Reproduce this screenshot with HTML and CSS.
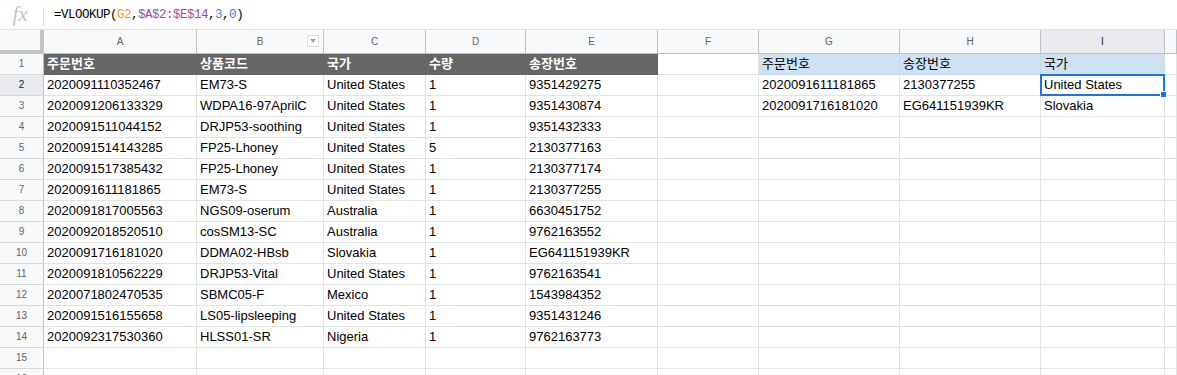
FILE: index.html
```html
<!DOCTYPE html>
<html lang="ko">
<head>
    <meta charset="UTF-8">
    <title>VLOOKUP</title>
    <link rel="stylesheet" href="styles.css">
</head>
<body>
    <div class="formula-bar">
        <span class="fx">fx</span>
        <span class="sep"></span>
        <div class="formula">=VLOOKUP(<span class="ref1">G2</span>,<span class="ref2">$A$2:$E$14</span>,<span class="num">3</span>,<span class="num">0</span>)</div>
    </div>

    <div class="sheet">
        <!-- column headers -->
        <div class="corner"></div>
        <div class="ch">A</div>
        <div class="ch filter-col">B<span class="filter"></span></div>
        <div class="ch">C</div>
        <div class="ch">D</div>
        <div class="ch">E</div>
        <div class="ch">F</div>
        <div class="ch">G</div>
        <div class="ch">H</div>
        <div class="ch active">I</div>
        <div class="ch"></div>

        <!-- row 1 -->
        <div class="rh">1</div>
        <div class="c dark">주문번호</div>
        <div class="c dark">상품코드</div>
        <div class="c dark">국가</div>
        <div class="c dark">수량</div>
        <div class="c dark">송장번호</div>
        <div class="c"></div>
        <div class="c blue">주문번호</div>
        <div class="c blue">송장번호</div>
        <div class="c blue">국가</div>
        <div class="c"></div>

        <!-- row 2 -->
        <div class="rh active">2</div>
        <div class="c">2020091110352467</div>
        <div class="c">EM73-S</div>
        <div class="c">United States</div>
        <div class="c">1</div>
        <div class="c">9351429275</div>
        <div class="c"></div>
        <div class="c">2020091611181865</div>
        <div class="c">2130377255</div>
        <div class="c selected">United States<span class="handle"></span></div>
        <div class="c"></div>

        <!-- row 3 -->
        <div class="rh">3</div>
        <div class="c">2020091206133329</div>
        <div class="c">WDPA16-97AprilC</div>
        <div class="c">United States</div>
        <div class="c">1</div>
        <div class="c">9351430874</div>
        <div class="c"></div>
        <div class="c">2020091716181020</div>
        <div class="c">EG641151939KR</div>
        <div class="c">Slovakia</div>
        <div class="c"></div>

        <div class="rh">4</div>
        <div class="c">2020091511044152</div>
        <div class="c">DRJP53-soothing</div>
        <div class="c">United States</div>
        <div class="c">1</div>
        <div class="c">9351432333</div>
        <div class="c"></div><div class="c"></div><div class="c"></div><div class="c"></div><div class="c"></div>

        <div class="rh">5</div>
        <div class="c">2020091514143285</div>
        <div class="c">FP25-Lhoney</div>
        <div class="c">United States</div>
        <div class="c">5</div>
        <div class="c">2130377163</div>
        <div class="c"></div><div class="c"></div><div class="c"></div><div class="c"></div><div class="c"></div>

        <div class="rh">6</div>
        <div class="c">2020091517385432</div>
        <div class="c">FP25-Lhoney</div>
        <div class="c">United States</div>
        <div class="c">1</div>
        <div class="c">2130377174</div>
        <div class="c"></div><div class="c"></div><div class="c"></div><div class="c"></div><div class="c"></div>

        <div class="rh">7</div>
        <div class="c">2020091611181865</div>
        <div class="c">EM73-S</div>
        <div class="c">United States</div>
        <div class="c">1</div>
        <div class="c">2130377255</div>
        <div class="c"></div><div class="c"></div><div class="c"></div><div class="c"></div><div class="c"></div>

        <div class="rh">8</div>
        <div class="c">2020091817005563</div>
        <div class="c">NGS09-oserum</div>
        <div class="c">Australia</div>
        <div class="c">1</div>
        <div class="c">6630451752</div>
        <div class="c"></div><div class="c"></div><div class="c"></div><div class="c"></div><div class="c"></div>

        <div class="rh">9</div>
        <div class="c">2020092018520510</div>
        <div class="c">cosSM13-SC</div>
        <div class="c">Australia</div>
        <div class="c">1</div>
        <div class="c">9762163552</div>
        <div class="c"></div><div class="c"></div><div class="c"></div><div class="c"></div><div class="c"></div>

        <div class="rh">10</div>
        <div class="c">2020091716181020</div>
        <div class="c">DDMA02-HBsb</div>
        <div class="c">Slovakia</div>
        <div class="c">1</div>
        <div class="c">EG641151939KR</div>
        <div class="c"></div><div class="c"></div><div class="c"></div><div class="c"></div><div class="c"></div>

        <div class="rh">11</div>
        <div class="c">2020091810562229</div>
        <div class="c">DRJP53-Vital</div>
        <div class="c">United States</div>
        <div class="c">1</div>
        <div class="c">9762163541</div>
        <div class="c"></div><div class="c"></div><div class="c"></div><div class="c"></div><div class="c"></div>

        <div class="rh">12</div>
        <div class="c">2020071802470535</div>
        <div class="c">SBMC05-F</div>
        <div class="c">Mexico</div>
        <div class="c">1</div>
        <div class="c">1543984352</div>
        <div class="c"></div><div class="c"></div><div class="c"></div><div class="c"></div><div class="c"></div>

        <div class="rh">13</div>
        <div class="c">2020091516155658</div>
        <div class="c">LS05-lipsleeping</div>
        <div class="c">United States</div>
        <div class="c">1</div>
        <div class="c">9351431246</div>
        <div class="c"></div><div class="c"></div><div class="c"></div><div class="c"></div><div class="c"></div>

        <div class="rh">14</div>
        <div class="c">2020092317530360</div>
        <div class="c">HLSS01-SR</div>
        <div class="c">Nigeria</div>
        <div class="c">1</div>
        <div class="c">9762163773</div>
        <div class="c"></div><div class="c"></div><div class="c"></div><div class="c"></div><div class="c"></div>

        <div class="rh">15</div>
        <div class="c"></div><div class="c"></div><div class="c"></div><div class="c"></div><div class="c"></div>
        <div class="c"></div><div class="c"></div><div class="c"></div><div class="c"></div><div class="c"></div>

        <div class="rh">16</div>
        <div class="c"></div><div class="c"></div><div class="c"></div><div class="c"></div><div class="c"></div>
        <div class="c"></div><div class="c"></div><div class="c"></div><div class="c"></div><div class="c"></div>
    </div>
</body>
</html>
```

FILE: styles.css
```css
:root {
    --grid: #e2e3e3;
    --head-bg: #f8f9fa;
    --head-line: #c0c0c0;
    --select: #1a73e8;
}

* {
    box-sizing: border-box;
}

body {
    margin: 0;
    height: 375px;
    overflow: hidden;
    background: #fff;
    font-family: Arial, "Liberation Sans", "Noto Sans CJK KR", sans-serif;
    color: #000;
}

/* formula bar */
.formula-bar {
    display: flex;
    align-items: center;
    height: 30px;
    border-bottom: 1px solid #e0e0e0;
}

.fx {
    width: 40px;
    text-align: center;
    font-family: "Liberation Serif", serif;
    font-style: italic;
    font-size: 21px;
    color: #c4c4c4;
}

.sep {
    width: 1px;
    height: 19px;
    margin-left: 3px;
    margin-top: 3px;
    background: #e0e0e0;
}

.formula {
    padding-left: 10px;
    font-family: "Liberation Mono", monospace;
    font-size: 12.5px;
    letter-spacing: -0.5px;
    color: #000;
}

.ref1 { color: #f7981d; }
.ref2 { color: #9a4dae; }
.num { color: #3d7fd8; }

/* grid */
.sheet {
    display: grid;
    grid-template-columns: 44px 153px 127px 102px 100px 132px 101px 141px 141px 124px 1fr;
    grid-template-rows: 24px;
    grid-auto-rows: 21px;
}

.corner {
    background: var(--head-bg);
    border-right: 4px solid #c4c4c4;
    border-bottom: 4px solid #c4c4c4;
}

.ch {
    background: var(--head-bg);
    border-right: 1px solid var(--head-line);
    border-bottom: 1px solid var(--head-line);
    text-align: center;
    font-size: 10px;
    line-height: 23px;
    color: #5f6368;
}

.ch.active {
    background: #e8eaed;
    color: #202124;
}

.filter-col {
    position: relative;
}

.filter {
    position: absolute;
    right: 4px;
    top: 5px;
    width: 12px;
    height: 12px;
    border: 1px solid #dadce0;
    background: #fff;
}

.filter::after {
    content: "";
    position: absolute;
    left: 2px;
    top: 3px;
    border-left: 3px solid transparent;
    border-right: 3px solid transparent;
    border-top: 4px solid #9aa0a6;
}

.rh {
    background: var(--head-bg);
    border-right: 1px solid var(--head-line);
    border-bottom: 1px solid #d8d8d8;
    text-align: center;
    font-size: 10px;
    line-height: 20px;
    color: #5f6368;
}

.rh.active {
    background: #e8eaed;
    color: #202124;
}

.c {
    border-right: 1px solid var(--grid);
    border-bottom: 1px solid var(--grid);
    padding: 0 3px;
    font-size: 13px;
    line-height: 20px;
    white-space: nowrap;
    overflow: hidden;
}

.c.dark {
    background: #666666;
    border-color: #666666;
    color: #fff;
    font-weight: bold;
}

.c.blue {
    background: #cfe2f3;
    border-color: #c6d9ea;
}

.c.selected {
    position: relative;
    overflow: visible;
}

.c.selected::after {
    content: "";
    position: absolute;
    left: -1px;
    top: -1px;
    right: -1px;
    bottom: -1px;
    border: 2px solid var(--select);
}

.handle {
    position: absolute;
    right: -3px;
    bottom: -3px;
    width: 7px;
    height: 7px;
    background: var(--select);
    border: 1px solid #fff;
    z-index: 1;
}
```
